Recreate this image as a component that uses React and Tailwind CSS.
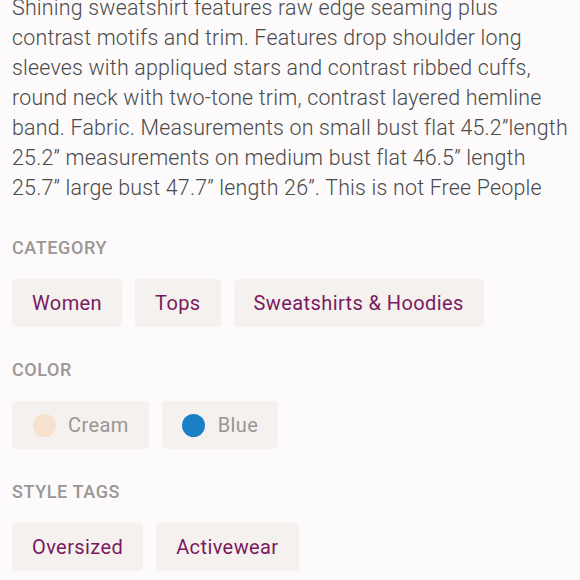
import React from 'react';

const descripcion = "Shining sweatshirt features raw edge seaming plus contrast motifs and trim. Features drop shoulder long sleeves with appliqued stars and contrast ribbed cuffs, round neck with two-tone trim, contrast layered hemline band. Fabric. Measurements on small bust flat 45.2\u201Dlength 25.2\u201D measurements on medium bust flat 46.5\u201D length 25.7\u201D large bust 47.7\u201D length 26\u201D. This is not Free People";

const Etiqueta = ({ children }) => (
  <h3 className="text-[18px] font-medium tracking-[0.6px] text-[#9b9794] leading-[24px] uppercase">{children}</h3>
);

const Chip = ({ children, apagado }) => (
  <div className={`h-[48px] flex items-center gap-[12px] px-[20px] rounded-[4px] bg-[#f4f1ef] text-[20px] tracking-[0.4px] ${apagado ? 'text-[#9a9694]' : 'text-[#7a1a5e]'}`}>
    {children}
  </div>
);

const Circulo = ({ color }) => (
  <span className="w-[24px] h-[24px] flex items-center justify-center">
    <span className={`w-[23px] h-[23px] rounded-full ${color}`} />
  </span>
);

export default function App() {
  return (
    <div className="w-[580px] h-[580px] overflow-hidden bg-[#fcfafa] px-[12px] font-['Roboto',sans-serif]">
      {/* Descripción del producto */}
      <p className="-mt-[7px] -mr-[4px] text-[21.4px] font-light leading-[30px] text-[#4a4a4a] tracking-[0.2px]">
        {descripcion}
      </p>

      <div className="mt-[33px]">
        <Etiqueta>Category</Etiqueta>
        <div className="mt-[19px] flex gap-[13px]">
          <Chip>Women</Chip>
          <Chip>Tops</Chip>
          <Chip>Sweatshirts &amp; Hoodies</Chip>
        </div>
      </div>

      <div className="mt-[31px]">
        <Etiqueta>Color</Etiqueta>
        <div className="mt-[19px] flex gap-[13px]">
          <Chip apagado>
            <Circulo color="bg-[#f6e2cc]" />
            Cream
          </Chip>
          <Chip apagado>
            <Circulo color="bg-[#1a7fc4]" />
            Blue
          </Chip>
        </div>
      </div>

      <div className="mt-[31px]">
        <Etiqueta>Style Tags</Etiqueta>
        <div className="mt-[19px] flex gap-[13px]">
          <Chip>Oversized</Chip>
          <Chip>Activewear</Chip>
        </div>
      </div>
    </div>
  );
}
